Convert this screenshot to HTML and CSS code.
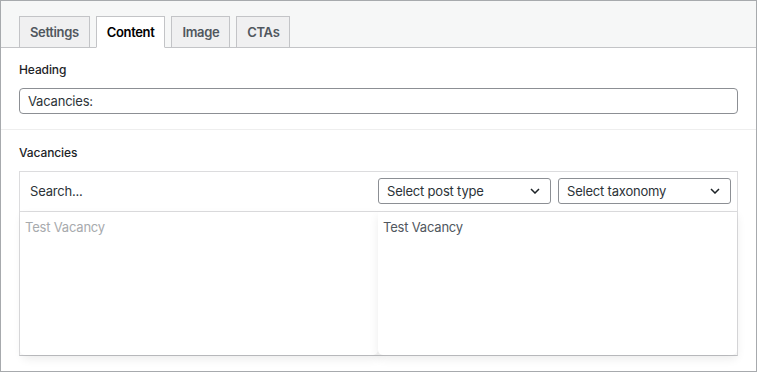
FILE: index.html
```html
<!DOCTYPE html>
<html>
<head>
<meta charset="utf-8">
<link rel="stylesheet" href="styles.css">
</head>
<body>
<div class="frame">
  <div class="tabbar">
    <div class="tab">Settings</div>
    <div class="tab active">Content</div>
    <div class="tab">Image</div>
    <div class="tab">CTAs</div>
  </div>
  <div class="field">
    <div class="label">Heading</div>
    <div class="input">Vacancies:</div>
  </div>
  <div class="field second">
    <div class="label">Vacancies</div>
    <div class="rel">
      <div class="filters">
        <div class="search">Search...</div>
        <div class="select"><span>Select post type</span><svg width="10" height="6" viewBox="0 0 10 6"><path d="M1 1l4 4 4-4" fill="none" stroke="#1d2327" stroke-width="1.5"/></svg></div>
        <div class="select"><span>Select taxonomy</span><svg width="10" height="6" viewBox="0 0 10 6"><path d="M1 1l4 4 4-4" fill="none" stroke="#1d2327" stroke-width="1.5"/></svg></div>
      </div>
      <div class="lists">
        <div class="list choices"><div class="item disabled">Test Vacancy</div></div>
        <div class="list values"><div class="item">Test Vacancy</div></div>
      </div>
    </div>
  </div>
</div>
</body>
</html>
```
FILE: styles.css
```css
* { box-sizing: border-box; }
body { margin: 0; font-family: Inter, "Noto Sans", sans-serif; font-size: 13px; color: #1d2327; }
.frame { width: 757px; height: 372px; border: 1px solid #a7aaad; background: #fff; overflow: hidden; }
.tabbar { background: #f6f7f7; height: 47px; border-bottom: 1px solid #c3c4c7; display: flex; align-items: flex-end; padding-left: 18px; gap: 6px; }
.tab { height: 32px; margin-bottom: -1px; padding: 0 10px; border: 1px solid #c3c4c7; background: #f0f0f1; color: #50575e; font-weight: 600; font-size: 13px; display: flex; align-items: center; letter-spacing: -0.35px; }
.tab.active { background: #fff; color: #000; border-bottom-color: #fff; }
.field { padding: 15px 18px 15px; }
.second { border-top: 1px solid #eeeeee; padding-top: 16px; }
.label { font-size: 12px; font-weight: 500; color: #1d2327; line-height: 14px; margin-bottom: 11px; letter-spacing: -0.1px; }
.input { height: 26px; border: 1px solid #8c8f94; border-radius: 4px; padding: 0 8px; display: flex; align-items: center; color: #2c3338; letter-spacing: -0.2px; }
.rel { border: 1px solid #dcdcde; border-bottom-color: #c3c4c7; }
.filters { height: 40px; display: flex; align-items: center; gap: 7px; padding-right: 6px; padding-bottom: 2px; border-bottom: 1px solid #dcdcde; }
.search { flex: 1; padding-left: 10px; color: #2c3338; letter-spacing: -0.2px; }
.select { width: 173px; height: 26px; border: 1px solid #8c8f94; border-radius: 3px; padding: 0 8px 0 8px; display: flex; align-items: center; justify-content: space-between; color: #2c3338; letter-spacing: -0.2px; }
.select svg { margin-right: 2px; }
.lists { display: flex; height: 143px; }
.list { flex: 1; background: #fff; border-radius: 0 0 5px 5px; padding: 6px 5px; }
.choices { box-shadow: 2px 4px 10px rgba(0,0,0,0.08); position: relative; z-index: 1; }
.values { box-shadow: 0 4px 10px rgba(0,0,0,0.08); position: relative; z-index: 2; flex: 0 0 359px; }
.item { line-height: 18px; color: #50575e; letter-spacing: -0.2px; }
.item.disabled { color: #a7aaad; }
```
